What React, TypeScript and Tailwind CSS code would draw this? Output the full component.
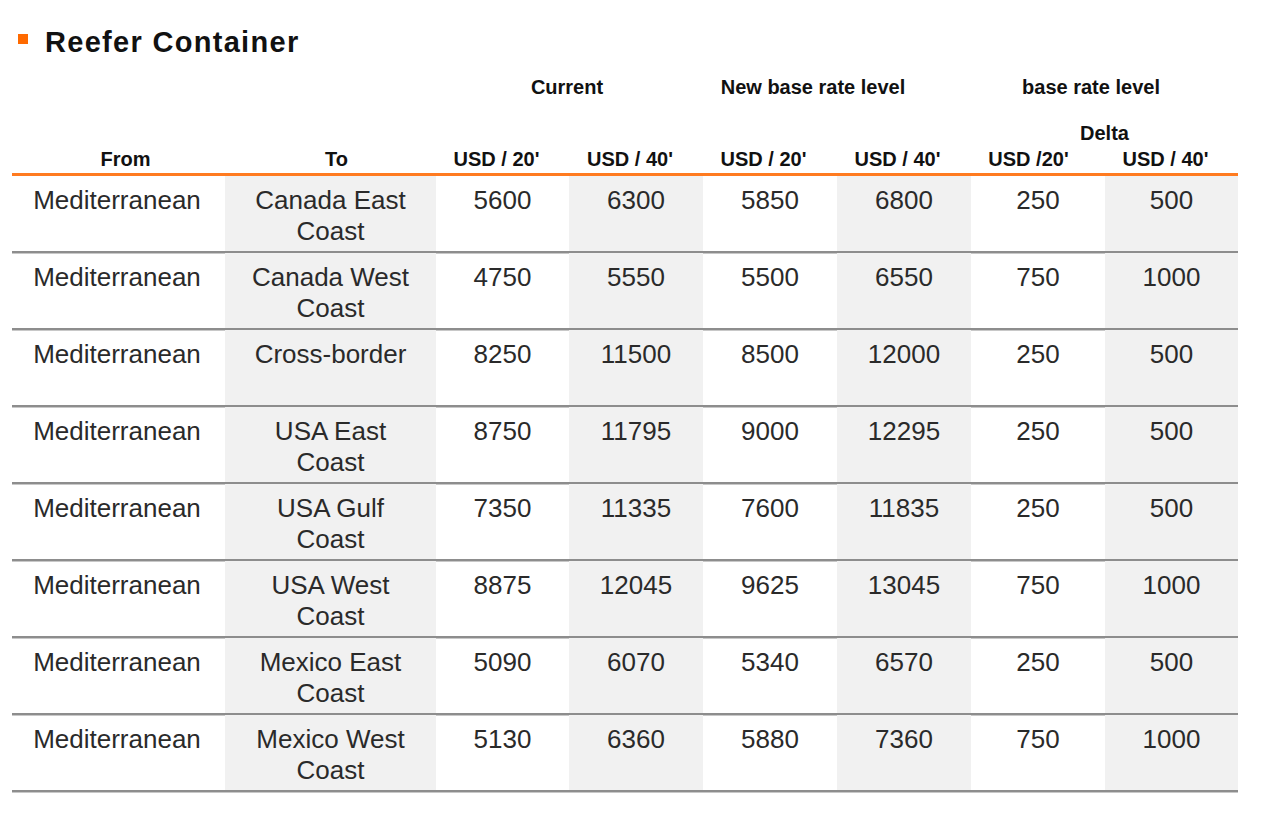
import React from 'react';

type Rate = {
  from: string;
  to: string[];
  values: number[];
};

const rates: Rate[] = [
  { from: 'Mediterranean', to: ['Canada East', 'Coast'], values: [5600, 6300, 5850, 6800, 250, 500] },
  { from: 'Mediterranean', to: ['Canada West', 'Coast'], values: [4750, 5550, 5500, 6550, 750, 1000] },
  { from: 'Mediterranean', to: ['Cross-border'], values: [8250, 11500, 8500, 12000, 250, 500] },
  { from: 'Mediterranean', to: ['USA East', 'Coast'], values: [8750, 11795, 9000, 12295, 250, 500] },
  { from: 'Mediterranean', to: ['USA Gulf', 'Coast'], values: [7350, 11335, 7600, 11835, 250, 500] },
  { from: 'Mediterranean', to: ['USA West', 'Coast'], values: [8875, 12045, 9625, 13045, 750, 1000] },
  { from: 'Mediterranean', to: ['Mexico East', 'Coast'], values: [5090, 6070, 5340, 6570, 250, 500] },
  { from: 'Mediterranean', to: ['Mexico West', 'Coast'], values: [5130, 6360, 5880, 7360, 750, 1000] },
];

const cols = 'grid grid-cols-[213px_211px_133px_134px_134px_134px_134px_133px]';

const App: React.FC = () => {
  return (
    <div className="w-[1280px] h-[826px] bg-white font-[family-name:'Liberation_Sans',Arial,sans-serif] overflow-hidden">
      {/* Title */}
      <div className="flex items-start pt-[25px] pl-[18px] h-[75px]">
        <span className="w-[10px] h-[10px] bg-[#ff6a00] mt-[9px]" />
        <h1 className="ml-[17px] text-[29px] leading-[34px] font-bold tracking-[1.3px] text-[#111]">
          Reefer Container
        </h1>
      </div>

      <div className="ml-[12px] w-[1226px]">
        {/* Group headers */}
        <div className={`${cols} h-[46px] text-[20px] leading-[24px] font-bold text-[#111]`}>
          <div className="col-span-2" />
          <div className="col-span-2 text-center pr-[5px]">Current</div>
          <div className="col-span-2 text-center pr-[48px]">New base rate level</div>
          <div className="col-span-2 text-center pr-[27px]">base rate level</div>
        </div>
        <div className={`${cols} h-[26px] text-[20px] leading-[24px] font-bold text-[#111]`}>
          <div className="col-span-6" />
          <div className="col-span-2 text-center">Delta</div>
        </div>
        <div className={`${cols} h-[26px] text-[20px] leading-[24px] font-bold text-[#111] border-b-[3px] border-[#ff7b20] box-content`}>
          <div className="text-center pl-[14px]">From</div>
          <div className="text-center pl-[12px]">To</div>
          <div className="text-center pr-[12px]">USD / 20'</div>
          <div className="text-center pr-[12px]">USD / 40'</div>
          <div className="text-center pr-[13px]">USD / 20'</div>
          <div className="text-center pr-[13px]">USD / 40'</div>
          <div className="text-center pr-[19px]">USD /20'</div>
          <div className="text-center pr-[12px]">USD / 40'</div>
        </div>

        {/* Rows */}
        {rates.map((r, i) => (
          <div
            key={i}
            className={`${cols} h-[77px] border-b-2 border-[#8d8d8d] shadow-[0_1px_0_#c8c8c8] text-[26px] leading-[31px] text-[#2a2a2a]`}
          >
            <div className="text-center pt-[9px] pr-[3px]">{r.from}</div>
            <div className="text-center pt-[9px] bg-[#f1f1f1]">
              {r.to.map((line) => (
                <div key={line}>{line}</div>
              ))}
            </div>
            {r.values.map((v, j) => (
              <div key={j} className={`text-center pt-[9px] ${j % 2 === 1 ? 'bg-[#f1f1f1]' : ''}`}>
                {v}
              </div>
            ))}
          </div>
        ))}
      </div>
    </div>
  );
};

export default App;
